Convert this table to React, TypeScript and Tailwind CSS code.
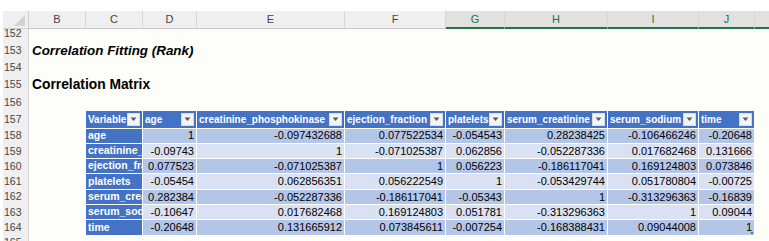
import React from 'react';

const FONT = { fontFamily: '"Liberation Sans", Arial, sans-serif' };

const COLS = [
  { l: 'B', w: 'w-[57px]', sel: false },
  { l: 'C', w: 'w-[57px]', sel: false },
  { l: 'D', w: 'w-[54px]', sel: false },
  { l: 'E', w: 'w-[148px]', sel: false },
  { l: 'F', w: 'w-[101px]', sel: false },
  { l: 'G', w: 'w-[59px]', sel: true },
  { l: 'H', w: 'w-[103px]', sel: true },
  { l: 'I', w: 'w-[91px]', sel: true },
  { l: 'J', w: 'w-[56px]', sel: true },
  { l: '', w: 'w-[60px]', sel: true },
];

const TW = ['w-[57px]', 'w-[54px]', 'w-[148px]', 'w-[101px]', 'w-[59px]', 'w-[103px]', 'w-[91px]', 'w-[56px]'];

const HEAD = ['Variable', 'age', 'creatinine_phosphokinase', 'ejection_fraction', 'platelets', 'serum_creatinine', 'serum_sodium', 'time'];

const DATA: [string, string[]][] = [
  ['age', ['1', '-0.097432688', '0.077522534', '-0.054543', '0.28238425', '-0.106466246', '-0.20648']],
  ['creatinine_phosphokinase', ['-0.09743', '1', '-0.071025387', '0.062856', '-0.052287336', '0.017682468', '0.131666']],
  ['ejection_fraction', ['0.077523', '-0.071025387', '1', '0.056223', '-0.186117041', '0.169124803', '0.073846']],
  ['platelets', ['-0.05454', '0.062856351', '0.056222549', '1', '-0.053429744', '0.051780804', '-0.00725']],
  ['serum_creatinine', ['0.282384', '-0.052287336', '-0.186117041', '-0.05343', '1', '-0.313296363', '-0.16839']],
  ['serum_sodium', ['-0.10647', '0.017682468', '0.169124803', '0.051781', '-0.313296363', '1', '0.09044']],
  ['time', ['-0.20648', '0.131665912', '0.073845611', '-0.007254', '-0.168388431', '0.09044008', '1']],
];

function RowNum({ n, extra = '' }: { n: number; extra?: string }) {
  return (
    <div className={`w-[26px] shrink-0 bg-[#efefef] border-r border-[#d4d4d4] flex items-center pl-[1px] text-[10.5px] text-[#444] ${extra}`}>
      {n}
    </div>
  );
}

function FilterBtn() {
  return (
    <div className="w-[13px] h-[13px] shrink-0 mr-[2px] bg-[#f4f4f4] border border-[#dcdcdc] flex items-center justify-center">
      <svg width="7" height="5" viewBox="0 0 7 5">
        <polygon points="0.5,0.5 6.5,0.5 3.5,4" fill="#5a5a5a" />
      </svg>
    </div>
  );
}

export default function App() {
  return (
    <div className="w-[769px] h-[241px] overflow-hidden bg-white" style={FONT}>
      <div className="h-[11px] bg-white" />
      {/* column headers */}
      <div className="flex h-[18px] pl-[3px]">
        <div className="w-[26px] shrink-0 bg-[#efefef] border-r border-b border-[#d0d0d0] relative">
          <svg className="absolute right-[3px] bottom-[2px]" width="11" height="11" viewBox="0 0 11 11">
            <polygon points="11,0 11,11 0,11" fill="#d2d2d2" />
          </svg>
        </div>
        {COLS.map((c, i) => (
          <div
            key={i}
            className={`${c.w} shrink-0 flex items-center justify-center text-[11px] border-r border-r-[#d6d6d6] ${
              c.sel
                ? 'bg-[#e1e1e1] text-[#217346] border-b-2 border-b-[#217346]'
                : 'bg-[#efefef] text-[#444] border-b border-b-[#c6c6c6]'
            }`}
          >
            {c.l}
          </div>
        ))}
      </div>

      {/* row 152 */}
      <div className="flex h-[13px] pl-[3px]">
        <RowNum n={152} extra="pb-[4px]" />
        <div className="flex-1 bg-[#fdfdf9]" />
      </div>
      {/* row 153 */}
      <div className="flex h-[17.25px] pl-[3px]">
        <RowNum n={153} />
        <div className="flex-1 bg-[#fdfdf9] flex items-end pl-[3px] pb-[2px]">
          <span className="font-bold italic text-[13.4px] leading-none text-black whitespace-nowrap">Correlation Fitting (Rank)</span>
        </div>
      </div>
      {/* row 154 */}
      <div className="flex h-[17.25px] pl-[3px]">
        <RowNum n={154} />
        <div className="flex-1 bg-[#fdfdf9]" />
      </div>
      {/* row 155 */}
      <div className="flex h-[17.25px] pl-[3px]">
        <RowNum n={155} />
        <div className="flex-1 bg-[#fdfdf9] flex items-end pl-[3px] pb-[2px]">
          <span className="font-bold text-[13.8px] leading-none text-black whitespace-nowrap">Correlation Matrix</span>
        </div>
      </div>
      {/* row 156 */}
      <div className="flex h-[17.25px] pl-[3px]">
        <RowNum n={156} />
        <div className="flex-1 bg-[#fdfdf9]" />
      </div>
      {/* row 157 - table header */}
      <div className="flex h-[17.5px] pl-[3px]">
        <RowNum n={157} />
        <div className="flex-1 bg-[#fdfdf9] flex">
          <div className="w-[57px] shrink-0" />
          {HEAD.map((h, i) => (
            <div
              key={i}
              className={`${TW[i]} shrink-0 bg-[#4472c4] border-r border-b border-white flex items-center text-white font-bold text-[10px]`}
            >
              <span className="flex-1 min-w-0 overflow-hidden whitespace-nowrap pl-[2px]">{h}</span>
              <FilterBtn />
            </div>
          ))}
        </div>
      </div>
      {/* rows 158-164 */}
      {DATA.map(([name, vals], r) => (
        <div key={r} className="flex h-[15.3px] pl-[3px]">
          <RowNum n={158 + r} />
          <div className="flex-1 bg-[#fdfdf9] flex">
            <div className="w-[57px] shrink-0" />
            <div className={`${TW[0]} shrink-0 bg-[#4472c4] border-r border-b border-white flex items-center overflow-hidden whitespace-nowrap pl-[2px] text-white font-bold text-[10.5px]`}>
              {name}
            </div>
            {vals.map((v, i) => (
              <div
                key={i}
                className={`${TW[i + 1]} shrink-0 ${r % 2 === 0 ? 'bg-[#b4c6e7]' : 'bg-[#d9e1f2]'} border-r border-b border-white flex items-center justify-end pr-[2px] text-[11px] text-black relative`}
              >
                {v}
                {r === DATA.length - 1 && i === vals.length - 1 && (
                  <span className="absolute right-[1px] bottom-[1px] w-[2px] h-[2px] bg-[#4472c4]" />
                )}
              </div>
            ))}
          </div>
        </div>
      ))}
      {/* row 165 */}
      <div className="flex h-[15.3px] pl-[3px]">
        <RowNum n={165} />
        <div className="flex-1 bg-[#fdfdf9]" />
      </div>
    </div>
  );
}
